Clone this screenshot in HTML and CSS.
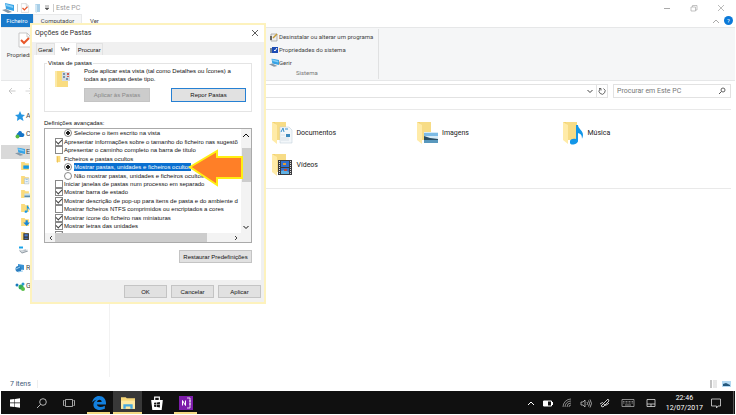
FILE: index.html
```html
<!DOCTYPE html>
<html lang="pt">
<head>
	<meta charset="UTF-8">
	<meta name="viewport" content="width=device-width, initial-scale=1.0">
	<title>Este PC</title>
	<link rel="stylesheet" href="styles.css">
</head>
<body>
<svg class="defs" aria-hidden="true">
	<symbol id="folder" viewBox="0 0 20 23">
		<path d="M1 1h14v18H1z" fill="#f3d272"/>
		<path d="M4 1h11v18H6z" fill="#f7dc86"/>
		<path d="M1 1l5 3v19l-5-4z" fill="#ffeba8"/>
	</symbol>
	<symbol id="small-folder" viewBox="0 0 9 9">
		<path d="M1 1h3l1 1h3v6H1z" fill="#fbdb7c"/>
	</symbol>
	<symbol id="note" viewBox="0 0 14 20">
		<path d="M6 0h2c0 4 5 5 5 10 0 2-1 3-1 4 0-4-1-5-4-6v8c0 3-7 5-8 2-1-4 3-5 6-4z" fill="#1296e8"/>
	</symbol>
	<symbol id="monitor" viewBox="0 0 12 11">
		<path d="M3 0l9 2v6L4 6z" fill="#36a3e6"/>
		<path d="M4 1l7 2v2L4 3z" fill="#86cdf5"/>
		<path d="M0 7l4-1 6 3-4 1z" fill="#8797a5"/>
	</symbol>
	<symbol id="up" viewBox="0 0 8 6"><path d="M1 5l3-3 3 3" fill="none" stroke="currentColor"/></symbol>
	<symbol id="down" viewBox="0 0 8 6"><path d="M1.500 2L4 4.500 6.500 2" fill="none" stroke="currentColor"/></symbol>
	<symbol id="close" viewBox="0 0 8 8"><path d="M1 1l6 6M7 1L1 7" fill="none" stroke="currentColor" stroke-width=".8"/></symbol>
	<symbol id="sheet" viewBox="0 0 14 16">
		<path d="M1 1h8l4 4v10H1z" fill="#fff" stroke="#bbb" stroke-width=".8"/>
		<path d="M9 1v4h4" fill="none" stroke="#bbb" stroke-width=".8"/>
		<path d="M3 8l3 3 5-5" fill="none" stroke="#e8572b" stroke-width="2"/>
	</symbol>
</svg>

<div class="window">
	<header class="titlebar">
		<svg class="ic12" viewBox="0 0 12 11"><use href="#monitor"/></svg>
		<span class="sep"></span>
		<svg class="ic10" viewBox="0 0 14 16"><use href="#sheet"/></svg>
		<svg class="ic10" viewBox="0 0 10 10"><path d="M3 1h5v8H3z" fill="#a9cfe8"/><path d="M3 1l2 1v8L3 9z" fill="#d2e8f5"/></svg>
		<svg class="ic6" viewBox="0 0 6 6"><path d="M1 1h4M1 3h4L3 5z" stroke="#555" stroke-width=".6" fill="#555"/></svg>
		<span class="sep"></span>
		<span class="title">Este PC</span>
		<div class="winbtns">
			<button aria-label="Minimizar"><svg class="ic8" viewBox="0 0 8 8"><path d="M1 4.500h6" stroke="#aaa"/></svg></button>
			<button aria-label="Restaurar"><svg class="ic8" viewBox="0 0 8 8"><path d="M1 3h4.500v4H1zM2.500 3V1.500H7V6H5.500" fill="none" stroke="#aaa" stroke-width=".7"/></svg></button>
			<button class="grey" aria-label="Fechar"><svg class="ic8"><use href="#close"/></svg></button>
		</div>
	</header>

	<nav class="tabs">
		<button class="file">Ficheiro</button>
		<button class="current">Computador</button>
		<button>Ver</button>
		<div class="help">
			<svg class="chev grey"><use href="#up"/></svg>
			<button class="q" aria-label="Ajuda">?</button>
		</div>
	</nav>

	<div class="ribbon">
		<button class="props">
			<svg viewBox="0 0 14 16"><use href="#sheet"/></svg>
			<span>Propriedades</span>
		</button>
		<div class="group">
			<button><svg class="ic10" viewBox="0 0 10 10"><path d="M2 2h6v7H2z" fill="#eee" stroke="#999" stroke-width=".7"/><path d="M1 4h2v4H1z" fill="#666"/><path d="M4 6l4-4" stroke="#c49a35" stroke-width="1.500"/></svg>Desinstalar ou alterar um programa</button>
			<button><svg class="ic10" viewBox="0 0 10 10"><path d="M3 2h6v6H3z" fill="#1b4bb5"/><path d="M1 3h2v5H1z" fill="#789"/><path d="M5 5l1 1 2-3" stroke="#fff" fill="none"/></svg>Propriedades do sistema</button>
			<button><svg class="ic10" viewBox="0 0 12 11"><use href="#monitor"/></svg>Gerir</button>
			<p>Sistema</p>
		</div>
	</div>

	<div class="address">
		<div class="arrows">
			<svg viewBox="0 0 8 8"><path d="M7.500 4H1M4 1L1 4l3 3" fill="none" stroke="#bbb" stroke-width=".8"/></svg>
			<svg viewBox="0 0 8 8"><path d="M.5 4H7M4 1l3 3-3 3" fill="none" stroke="#ccc" stroke-width=".8"/></svg>
		</div>
		<div class="path">
			<svg class="chev"><use href="#down"/></svg>
			<button aria-label="Atualizar"><svg class="ic8" viewBox="0 0 8 8"><path d="M5.500 1.500A3 3 0 1 1 2 2M1 1.500h2v2" fill="none" stroke="#666"/></svg></button>
		</div>
		<label class="search">
			<input type="text" placeholder="Procurar em Este PC" aria-label="Procurar em Este PC">
			<svg class="ic8" viewBox="0 0 8 8"><circle cx="5" cy="3" r="2" fill="none" stroke="#555" stroke-width=".9"/><path d="M3.500 4.500L1 7" stroke="#555"/></svg>
		</label>
	</div>

	<div class="body">
		<nav class="tree">
			<a href="#"><svg class="ic10" viewBox="0 0 10 10"><path d="M5 0l1.500 3.500L10 4 7.500 6l1 4L5 8 2 10l.5-4L0 4l3.500-.5z" fill="#2697e2"/></svg>Acesso Rápido</a>
			<a href="#" class="gap"><svg class="ic10" viewBox="0 0 10 10"><path d="M2 7c-1-3 1-3 1-3 1-3 4-2 4 0 3 0 3 3 1 4H3z" fill="#1674c8"/><circle cx="2.500" cy="7.500" r="2" fill="#58b845"/></svg>Creative Cloud</a>
			<a href="#" class="gap on"><svg class="ic10" viewBox="0 0 12 11"><use href="#monitor"/></svg>Este PC</a>
			<a href="#" class="sub" aria-label="Ambiente de trabalho"><svg class="ic10" viewBox="0 0 9 9"><use href="#small-folder"/><path d="M3 4h5v3H3z" fill="#159ae6"/></svg></a>
			<a href="#" class="sub" aria-label="Documentos"><svg class="ic10" viewBox="0 0 9 9"><use href="#small-folder"/><path d="M4 3h4v5H4z" fill="#eef5fa" stroke="#9bb5c8" stroke-width=".4"/><path d="M5 4h2M5 6h2" stroke="#5b9fd0" stroke-width=".5"/></svg></a>
			<a href="#" class="sub" aria-label="Imagens"><svg class="ic10" viewBox="0 0 9 9"><use href="#small-folder"/><path d="M4 4h5v4H4z" fill="#c4dff0"/><path d="M4 6h5v1H4z" fill="#3f7397"/></svg></a>
			<a href="#" class="sub" aria-label="Música"><svg class="ic10" viewBox="0 0 9 9"><use href="#small-folder"/><use href="#note" x="4" y="2" width="5" height="7"/></svg></a>
			<a href="#" class="sub" aria-label="Transferências"><svg class="ic10" viewBox="0 0 9 9"><use href="#small-folder"/><path d="M5 3h2v2h2L6 8 3 5h2z" fill="#1687d9"/></svg></a>
			<a href="#" class="sub" aria-label="Vídeos"><svg class="ic10" viewBox="0 0 9 9"><use href="#small-folder"/><path d="M3 2h5v6H3z" fill="#343434"/><path d="M4 3h3v2H4zM4 6h3v1H4z" fill="#4a7dd0"/></svg></a>
			<a href="#" class="sub drive" aria-label="Disco"><svg class="ic10" viewBox="0 0 10 9"><path d="M1 5l7-1 2 2-6 2z" fill="#8f9aa3"/><path d="M1 4l6 1 3-1v1L4 7z" fill="#d4dadf"/><path d="M1 1h4v2H1z" fill="#18a2e8"/></svg></a>
			<a href="#" class="gap"><svg class="ic10" viewBox="0 0 10 10"><path d="M3 1l6 1v5L3 6z" fill="#3a93d5"/><circle cx="3.500" cy="6" r="3" fill="#2b7dbf"/><path d="M1 6l4-2M3 9l5-1" stroke="#9ed2f3"/></svg>Rede</a>
			<a href="#" class="gap"><svg class="ic10" viewBox="0 0 10 10"><circle cx="2" cy="4" r="1.500" fill="#1779bd"/><circle cx="6" cy="6" r="2.500" fill="#34ad5b"/><circle cx="8" cy="3" r="1.500" fill="#2c98cf"/><circle cx="8" cy="8" r="2" fill="#5abf49"/></svg>Grupo Doméstico</a>
		</nav>
		<main>
			<div class="folders">
				<a href="#" class="second"><svg viewBox="0 0 22 24"><use href="#folder" width="20" height="23"/><path d="M9 6h9l3 3v13H9z" fill="#f3f7fa" stroke="#b9c9d4" stroke-width=".5"/><path d="M10 11l2-4 1 4M14 8h3" stroke="#3d93cf" fill="none"/><path d="M15 13h4v3h-4z" fill="#3d89bd"/><path d="M10 14h4M10 17h8M10 19h8" stroke="#bccbd6" stroke-width=".5"/></svg>Documentos</a>
				<a href="#"><svg viewBox="0 0 22 24"><use href="#folder" width="20" height="23"/><path d="M8 11h14v11H8z" fill="#d6ebf7"/><path d="M8 12h14v3H8z" fill="#7cbbe5"/><path d="M8 15l6 2 8 1v1H8z" fill="#274d63"/><path d="M8 19h14v3H8z" fill="#5998bd"/></svg>Imagens</a>
				<a href="#"><svg viewBox="0 0 22 24"><use href="#folder" width="20" height="23"/><use href="#note" x="8" y="4" width="14" height="20"/></svg>Música</a>
				<a href="#" class="second"><svg viewBox="0 0 22 24"><use href="#folder" width="20" height="23"/><path d="M7 7h14v15H7z" fill="#3b3b3f"/><path d="M10 8h8v6h-8zM10 15h8v6h-8z" fill="#326fce"/><path d="M12 10h3v2h-3z" fill="#e49a32"/><path d="M10 18l4-1 4 2v2h-8z" fill="#60b1e3"/><path d="M13 16h3v2h-3z" fill="#bf4c35"/><path d="M8.500 8v13M19.500 8v13" stroke="#ddd" stroke-dasharray="1 1"/></svg>Vídeos</a>
			</div>
		</main>
	</div>

	<footer class="status">
		<span>7 itens</span>
		<div>
			<svg viewBox="0 0 9 9"><path d="M1 1h2M1 3h2M1 5h2M1 7h2" stroke="#888"/><path d="M4 1h4M4 3h4M4 5h4M4 7h4" stroke="#bbb" stroke-width=".7"/></svg>
			<svg viewBox="0 0 9 9"><path d="M0 1h9v6H0z" fill="#b4d9f2"/><path d="M1 4l3-1 4 2v1H1z" fill="#24587d"/></svg>
		</div>
	</footer>
</div>

<section class="dialog" role="dialog" aria-label="Opções de Pastas">
	<header>
		<h1>Opções de Pastas</h1>
		<button aria-label="Fechar"><svg class="ic8"><use href="#close"/></svg></button>
	</header>
	<div class="dtabs">
		<button>Geral</button>
		<button class="sel">Ver</button>
		<button>Procurar</button>
	</div>
	<div class="page">
		<fieldset>
			<legend>Vistas de pastas</legend>
			<svg viewBox="0 0 15 18"><path d="M0 1h9l1 1h3v15H0z" fill="#f9dc80"/><path d="M0 1h2v16H0z" fill="#fce9a6"/><path d="M7 2h8v9H7z" fill="#d5dce3"/><path d="M8 3h2v2H8zM8 6h2v2H8zM11 8h2v2h-2z" fill="#7892ab"/><path d="M12 3h2v2h-2zM12 6h2v1h-2z" fill="#cf5c54"/></svg>
			<div class="views">
				<p>Pode aplicar esta vista (tal como Detalhes ou Ícones) a todas as pastas deste tipo.</p>
				<div class="pair">
					<button class="btn" disabled>Aplicar às Pastas</button>
					<button class="btn focus">Repor Pastas</button>
				</div>
			</div>
		</fieldset>
		<h2>Definições avançadas:</h2>
		<div class="list">
			<div class="view">
				<div class="rows">
					<label class="in"><input type="radio" name="select" checked><span>Selecione o item escrito na vista</span></label>
					<label><input type="checkbox" checked><span>Apresentar informações sobre o tamanho do ficheiro nas sugestõ</span></label>
					<label><input type="checkbox"><span>Apresentar o caminho completo na barra de título</span></label>
					<div class="head"><svg viewBox="0 0 9 9"><path d="M2 1h4v7H2z" fill="#fbdb7c"/><path d="M2 1l1 1v7L2 8z" fill="#e7b945"/></svg><span>Ficheiros e pastas ocultos</span></div>
					<label class="in"><input type="radio" name="hidden" checked><span class="picked">Mostrar pastas, unidades e ficheiros ocultos</span></label>
					<label class="in"><input type="radio" name="hidden"><span>Não mostrar pastas, unidades e ficheiros ocultos</span></label>
					<label><input type="checkbox"><span>Iniciar janelas de pastas num processo em separado</span></label>
					<label><input type="checkbox" checked><span>Mostrar barra de estado</span></label>
					<label><input type="checkbox" checked><span>Mostrar descrição de pop-up para itens de pasta e do ambiente d</span></label>
					<label><input type="checkbox"><span>Mostrar ficheiros NTFS comprimidos ou encriptados a cores</span></label>
					<label><input type="checkbox" checked><span>Mostrar ícone do ficheiro nas miniaturas</span></label>
					<label><input type="checkbox" checked><span>Mostrar letras das unidades</span></label>
					<label><input type="checkbox" checked><span>Mostrar notificações do fornecedor de sincronização</span></label>
				</div>
			</div>
			<div class="vbar">
				<svg class="chev"><use href="#up"/></svg>
				<div class="thumb"></div>
				<svg class="chev"><use href="#down"/></svg>
			</div>
			<div class="hbar">
				<svg viewBox="0 0 4 6"><path d="M3 1L1 3l2 2" fill="none" stroke="#444"/></svg>
				<div class="thumb"></div>
				<svg viewBox="0 0 4 6"><path d="M1 1l2 2-2 2" fill="none" stroke="#444"/></svg>
			</div>
			<svg class="pointer" viewBox="0 0 56 38"><path d="M2 18L29 2v6h25v21H29v7z" fill="#ff7f27" stroke="#ffee14" stroke-width="2"/></svg>
		</div>
		<button class="btn restore">Restaurar Predefinições</button>
	</div>
	<div class="actions">
		<button class="btn">OK</button>
		<button class="btn">Cancelar</button>
		<button class="btn">Aplicar</button>
	</div>
</section>

<footer class="taskbar">
	<div class="apps">
		<button aria-label="Iniciar"><svg viewBox="0 0 12 12"><path d="M1 2.500L5.500 2v3.600H1zM6 2l5-.8v4.400H6zM1 6.200h4.500V10L1 9.500zM6 6.200h5v4.600L6 10z" fill="#fff"/></svg></button>
		<button aria-label="Procurar"><svg viewBox="0 0 12 12"><circle cx="7" cy="5" r="3.300" fill="none" stroke="#ddd" stroke-width=".8"/><path d="M4.500 7.500L1 11" stroke="#ddd" stroke-width=".8"/></svg></button>
		<button aria-label="Vista de tarefas"><svg viewBox="0 0 12 12"><path d="M2.500 2.500h7v7h-7zM1.500 3.500H.5v5h1M10.500 3.500h1v5h-1" fill="none" stroke="#ccc" stroke-width=".8"/></svg></button>
		<button class="app open" aria-label="Edge"><svg viewBox="0 0 12 12"><path d="M0 5.500C1 2 3 0 6 0c4 0 6 3 6 6v1.300H4.200C4.500 9.700 8 10 11 8.300v2.700C7 13 1.200 12 1.200 7.500 1.200 5.500 2.500 4 4 3.200 2.500 3.500 1 4.300 0 5.500zM4.300 5.200h4C8.300 2.500 4.700 2.500 4.300 5.200z" fill="#1380de"/></svg></button>
		<button class="app open active" aria-label="Explorador"><svg viewBox="0 0 12 12"><path d="M0 1h4l1 1h7v9H0z" fill="#f7d779"/><path d="M0 4h12v7H0z" fill="#ffe9a1"/><path d="M2 11V7h8v4H8V9H4v2z" fill="#48a9df"/></svg></button>
		<button class="app" aria-label="Loja"><svg viewBox="0 0 12 12"><path d="M1 3.500h10l-1 8.500H2z" fill="#fff"/><path d="M4 3.500V1h4v2.500" fill="none" stroke="#fff"/><path d="M3.500 5.800l2-.2v1.700h-2zM6 5.500l2.500-.3v2.100H6zM3.500 7.800h2v1.700l-2-.2zM6 7.800h2.500v2L6 9.500z" fill="#111"/></svg></button>
		<button class="app open" aria-label="OneNote"><svg viewBox="0 0 14 14"><path d="M0 0h14v14H0z" fill="#7d1cab"/><path d="M8 2h3v10H8" fill="none" stroke="#fff" stroke-width=".8"/><path d="M10 5h2M10 8h2" stroke="#fff" stroke-width=".8"/><path d="M2 3l6-1v10l-6-1z" fill="#7d1cab"/><path d="M3.500 9.500v-5l3 5v-5" fill="none" stroke="#fff"/></svg></button>
	</div>
	<div class="tray">
		<svg class="chev"><use href="#up"/></svg>
		<svg viewBox="0 0 12 12"><path d="M1.500 4h8v5h-8z" fill="none" stroke="#fff"/><path d="M2 4h4v5H2zM10 5h1v3h-1z" fill="#fff"/></svg>
		<svg viewBox="0 0 12 12"><path d="M2 10a8 8 0 0 1 8-8M4 10a6 6 0 0 1 6-6M6 10a4 4 0 0 1 4-4M8 10a2 2 0 0 1 2-2" fill="none" stroke="#bbb" stroke-width=".7"/></svg>
		<svg viewBox="0 0 12 12"><path d="M1 5h2l2-2v7L3 8H1zM7 5q1 1.500 0 3M8.500 3.500q2 3 0 6M10 2.500q3 4 0 8" fill="none" stroke="#ddd" stroke-width=".7"/></svg>
		<svg viewBox="0 0 12 12"><path d="M2 9l7-7 1 2-6 6zM1 7q3-3 4 0t5-1" fill="none" stroke="#ddd" stroke-width=".9"/></svg>
		<svg class="kb" viewBox="0 0 14 12"><path d="M1 2.500h12v7H1z" fill="none" stroke="#aaa" stroke-width=".8"/><path d="M2 4.500h10M2 6h10" stroke="#aaa" stroke-width=".7" stroke-dasharray="1 .5"/><path d="M4 8h6" stroke="#aaa" stroke-width=".8"/></svg>
		<svg viewBox="0 0 12 12"><path d="M2 2.500h8v7H2zM2 7h8M6 7v2.500" fill="none" stroke="#ddd" stroke-width=".8"/></svg>
		<time>22:46<br>12/07/2017</time>
		<svg viewBox="0 0 12 12"><path d="M1.500 2h9v7H8l-1.500 2V9h-5z" fill="none" stroke="#ddd" stroke-width=".8"/></svg>
	</div>
</footer>
</body>
</html>
```
FILE: styles.css
```css
*{
	box-sizing: border-box;
}
body{
	margin: 0;
	padding: 0 1px 1px;
	min-height: 100vh;
	display: flex;
	flex-direction: column;
	background: #fff;
	font-family: Roboto, sans-serif;
	font-size: 6px;
	line-height: 8px;
	color: #444;
}
button, input{
	font: inherit;
	color: inherit;
	margin: 0;
	padding: 0;
	border: 0;
	background: none;
}
h1, h2, p{
	margin: 0;
	font-size: inherit;
	font-weight: normal;
}
a{
	color: inherit;
	text-decoration: none;
}
svg{
	display: block;
	flex: none;
}
.defs{
	position: absolute;
	width: 0;
	height: 0;
}
.ic12{ width: 12px; height: 11px; }
.ic10{ width: 10px; height: 10px; }
.ic8{ width: 8px; height: 8px; }
.ic6{ width: 6px; height: 6px; }
.chev{ width: 8px; height: 6px; }
.grey{ color: #aaa; }

/* explorer window */
.window{
	flex: 1;
	display: flex;
	flex-direction: column;
}
.titlebar{
	height: 14px;
	display: flex;
	align-items: center;
	gap: 2px;
	padding: 2px 10px 0 1px;
}
.sep{
	width: 1px;
	height: 8px;
	margin-left: 1px;
	background: #ccc;
}
.title{
	font-size: 7px;
	color: #999;
}
.winbtns{
	margin-left: auto;
	display: flex;
	gap: 19px;
}
.tabs{
	height: 13px;
	display: flex;
}
.tabs > button{
	padding: 0 8px;
}
.tabs .file{
	width: 32px;
	padding: 0;
	background: #1979ca;
	color: #fff;
}
.tabs .current{
	width: 49px;
	padding: 0;
	background: #f5f6f7;
	border: 1px solid #e8e9ea;
	border-bottom: 0;
}
.help{
	margin-left: auto;
	display: flex;
	align-items: center;
	gap: 4px;
	padding-right: 2px;
}
.q{
	width: 9px;
	height: 9px;
	border-radius: 50%;
	background: #0b79d8;
	color: #fff;
	line-height: 9px;
}
.ribbon{
	height: 54px;
	display: flex;
	background: #f5f6f7;
	border: 1px solid #e6e7e8;
	border-width: 1px 0;
}
.props{
	display: flex;
	flex-direction: column;
	align-items: center;
	gap: 3px;
	padding: 4px 3px 0 4px;
	width: 46px;
}
.props svg{
	width: 14px;
	height: 16px;
}
.group{
	margin: 1px 0 1px 216px;
	padding: 1px 5px 0 6px;
	display: flex;
	flex-direction: column;
	border-right: 1px solid #e0e1e2;
}
.group button{
	height: 13px;
	display: flex;
	align-items: center;
	white-space: nowrap;
}
.group p{
	padding: 0 32px 0 27px;
	color: #777;
}
.address{
	height: 19px;
	display: flex;
	align-items: center;
	gap: 5px;
	padding: 0 4px 0 7px;
}
.arrows{
	width: 80px;
	display: flex;
	gap: 9px;
}
.arrows svg{
	width: 8px;
	height: 8px;
}
.path, .search{
	height: 14px;
	border: 1px solid #e2e2e2;
	display: flex;
	align-items: center;
}
.path{
	flex: 1;
	justify-content: flex-end;
	gap: 2px;
}
.path button{
	height: 12px;
	padding: 0 1px;
	border-left: 1px solid #e2e2e2;
}
.search{
	width: 118px;
	padding: 0 4px 0 3px;
	font-size: 7px;
}
.search input{
	flex: 1;
	min-width: 0;
	outline: 0;
}
.search input::placeholder{
	color: #777;
	opacity: 1;
}
.body{
	flex: 1;
	display: flex;
}
.tree{
	width: 109px;
	padding-top: 9px;
	border-right: 1px solid #f2f2f2;
}
.tree a{
	height: 14px;
	display: flex;
	align-items: center;
	gap: 1px;
	padding-left: 14px;
	white-space: nowrap;
	font-size: 7px;
}
.tree .gap{
	margin-top: 4px;
}
.tree .on{
	background: #d9d9d9;
}
.tree .sub{
	padding-left: 19px;
}
.tree .drive{
	padding-left: 17px;
}
main{
	flex: 1;
	padding: 9px 4px 0 15px;
}
.folders{
	display: grid;
	grid-template-columns: repeat(4, 1fr);
	grid-auto-rows: 32px;
	padding: 7px 24px 7px 0;
	border: 1px solid #e9e9e9;
	border-width: 1px 0;
}
.folders a{
	display: flex;
	align-items: center;
	gap: 4px;
	font-size: 7px;
	color: #222;
}
.folders .second{
	grid-column-start: 2;
}
.folders svg{
	width: 22px;
	height: 24px;
}
.status{
	height: 14px;
	display: flex;
	align-items: center;
	justify-content: space-between;
	padding: 0 4px 0 9px;
	font-size: 7px;
	color: #3f5a78;
}
.status span{
	padding-right: 6px;
	border-right: 1px solid #eee;
}
.status div{
	display: flex;
	gap: 4px;
}
.status svg{
	width: 9px;
	height: 9px;
}

/* folder options dialog */
.dialog{
	position: absolute;
	left: 30px;
	top: 23px;
	width: 236px;
	padding: 0 3px 0 2px;
	border: 2px solid #fdf2bd;
	background: #f0f0f0;
	font-family: 'Liberation Sans', sans-serif;
	font-size: 6px;
	color: #111;
}
.dialog header{
	height: 17px;
	margin: 0 -3px 0 -2px;
	padding: 0 5px 2px 3px;
	display: flex;
	align-items: center;
	justify-content: space-between;
	background: #fff;
	color: #333;
}
.dialog h1{
	font-family: Roboto, sans-serif;
	font-size: 7px;
}
.dtabs{
	display: flex;
	height: 12px;
	margin-top: 1px;
	padding-left: 2px;
}
.dtabs button{
	padding: 0 1px;
	border: 1px solid #e2e2e2;
	border-bottom: 0;
}
.dtabs .sel{
	width: 21px;
	padding-bottom: 1px;
	background: #fff;
	border-color: #fff;
}
.page{
	display: flex;
	flex-direction: column;
	height: 225px;
	padding: 4px 9px 0 10px;
	background: #fff;
}
fieldset{
	margin: 0;
	padding: 0 5px 8px 10px;
	border: 1px solid #e4e4e4;
	display: flex;
	gap: 14px;
	height: 53px;
}
legend{
	margin-left: -8px;
	padding: 0 1px;
}
fieldset > svg{
	width: 15px;
	height: 18px;
	margin-top: 3px;
}
.views{
	flex: 1;
}
.pair{
	display: flex;
	justify-content: space-between;
	padding-top: 5px;
}
.btn{
	width: 43px;
	height: 13px;
	background: #e1e1e1;
	border: 1px solid #c4c4c4;
}
.pair .btn{
	width: 66px;
	height: 14px;
}
.btn:disabled{
	background: #ccc;
	color: #888;
}
.pair .focus{
	width: 75px;
	border-color: #2680d3;
}
.page h2{
	padding: 7px 0 1px;
}
.list{
	position: relative;
	display: grid;
	grid-template-columns: 1fr 10px;
	grid-template-rows: 104px 9px;
	border: 1px solid #aaa;
}
.view{
	overflow: hidden;
}
.rows{
	height: 110px;
	display: grid;
	grid-auto-rows: 1fr;
	padding-left: 10px;
}
.rows label, .head{
	display: flex;
	align-items: center;
	gap: 1px;
	white-space: nowrap;
}
.rows .in{
	padding-left: 9px;
}
.rows input{
	appearance: none;
	flex: none;
	width: 8px;
	height: 8px;
	border: 1px solid #888;
	background: #fff;
}
.rows input[type=radio]{
	border-radius: 50%;
	margin-right: 1px;
}
.rows input[type=radio]:checked{
	background: radial-gradient(#222 0 2px, #fff 2px);
}
.rows input[type=checkbox]:checked::before{
	content: "";
	display: block;
	width: 5px;
	height: 3px;
	border: solid #444;
	border-width: 0 0 1px 1px;
	transform: rotate(-45deg);
}
.head svg{
	width: 8px;
	height: 8px;
}
.picked{
	background: #0a6fd0;
	color: #fff;
}
.vbar{
	display: flex;
	flex-direction: column;
	align-items: center;
	padding: 3px 0;
	background: #f3f3f3;
}
.vbar .thumb{
	width: 9px;
	height: 34px;
	margin: 10px 0 auto;
	background: #cdcdcd;
}
.hbar{
	grid-column: 1 / 3;
	display: flex;
	align-items: center;
	padding: 0 13px 0 4px;
	background: #f3f3f3;
}
.hbar svg{
	width: 4px;
	height: 6px;
}
.hbar .thumb{
	width: 152px;
	height: 9px;
	margin: 0 auto 0 2px;
	background: #cdcdcd;
}
.pointer{
	position: absolute;
	right: 7px;
	top: 20px;
	width: 56px;
	height: 38px;
}
.restore{
	width: 73px;
	margin: 7px 0 0 auto;
}
.actions{
	display: flex;
	justify-content: flex-end;
	gap: 4px;
	padding: 5px 0 4px;
}

/* taskbar */
.taskbar{
	height: 23px;
	display: flex;
	justify-content: space-between;
	background: #101010;
	color: #fff;
}
.apps, .tray{
	display: flex;
	align-items: center;
}
.apps button{
	width: 27px;
	height: 23px;
	padding-top: 1px;
	display: flex;
	align-items: center;
	justify-content: center;
}
.apps svg{
	width: 12px;
	height: 12px;
}
.apps .app{
	width: 23px;
	margin: 0 3px;
	box-shadow: inset 0 -2px #101010;
}
.apps .app:nth-child(4){
	margin-left: 5px;
}
.apps .open{
	box-shadow: inset 0 -2px #f3da83;
}
.apps .active{
	width: 29px;
	margin: 0;
	background: #383838;
}
.apps .app svg{
	width: 14px;
	height: 14px;
}
.tray{
	gap: 7px;
	padding-right: 11px;
	border-right: 1px solid #555;
	margin-right: 1px;
}
.tray svg{
	width: 12px;
	height: 12px;
}
.tray .chev{
	width: 8px;
	height: 6px;
}
.tray .kb{
	width: 14px;
	margin: 0 3px;
}
.tray time{
	margin-left: 2px;
	font-size: 7px;
	line-height: 10px;
	text-align: center;
}
```
